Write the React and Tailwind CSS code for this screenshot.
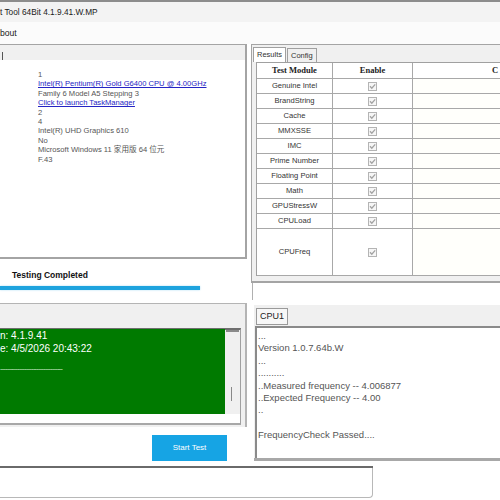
import React from "react";

const sysInfo = [
    { text: "1" },
    { text: "Intel(R) Pentium(R) Gold G6400 CPU @ 4.00GHz", link: true },
    { text: "Family 6 Model A5 Stepping 3" },
    { text: "Click to launch TaskManager", link: true },
    { text: "2" },
    { text: "4" },
    { text: "Intel(R) UHD Graphics 610" },
    { text: "No" },
    { text: "Microsoft Windows 11 家用版 64 位元" },
    { text: "F.43" },
];

const modules = [
    "Genuine Intel",
    "BrandString",
    "Cache",
    "MMXSSE",
    "IMC",
    "Prime Number",
    "Floating Point",
    "Math",
    "GPUStressW",
    "CPULoad",
];

const freqLog = [
    "...",
    "Version 1.0.7.64b.W",
    "...",
    "..........",
    "..Measured frequency -- 4.006877",
    "..Expected Frequency -- 4.00",
    "..",
    "\u00a0",
    "FrequencyCheck Passed....",
];

// greyed-out (disabled) checked box
const CheckBox = () => (
    <svg width="9" height="9" viewBox="0 0 9 9">
        <rect x="0.5" y="0.5" width="8" height="8" fill="#f6f6f6" stroke="#b4b4b4" />
        <path d="M2 4.3 L3.8 6.2 L7.2 2.4" fill="none" stroke="#a2a2a2" strokeWidth="1.3" />
    </svg>
);

const ModuleRow = ({ name, tall }) => (
    <div className={`flex border-b border-[#a8a8a8] ${tall ? "h-[47px]" : "h-[15px]"}`}>
        <div className="w-[76px] shrink-0 border-r border-[#a8a8a8] flex items-center justify-center text-[7.6px] text-[#333]">{name}</div>
        <div className="w-[80px] shrink-0 border-r border-[#a8a8a8] flex items-center justify-center">
            <CheckBox />
        </div>
        <div className="flex-1 bg-[#fffffb]" />
    </div>
);

const App = () => {
    return (
        <div className="w-[500px] h-[500px] overflow-hidden bg-white flex flex-col font-['Liberation_Sans','Noto_Sans_CJK_TC',sans-serif] text-[#333]">
            <div className="h-[2px] bg-[#8c8c8c]" />
            {/* title + menu */}
            <div className="h-[20px] bg-[#f3f3f3] flex items-center text-[8.3px] text-[#1a1a1a]">t Tool 64Bit 4.1.9.41.W.MP</div>
            <div className="h-[22px] bg-[#fbfbfb] flex items-center text-[8.6px] text-[#1a1a1a]">bout</div>

            <div className="flex h-[422px]">
                {/* left column */}
                <div className="w-[247px] shrink-0 flex flex-col">
                    <div className="h-[215px] border-t border-r-2 border-b-2 border-[#a4a4a4] flex flex-col">
                        <div className="h-[15px] bg-[#f0f0f0] relative">
                            <div className="absolute left-[2px] top-[7px] w-[1px] h-[8px] bg-[#555]" />
                        </div>
                        <div className="flex-1 bg-white pl-[38px] pt-[10px] text-[7.6px] leading-[9.4px] text-[#555]">
                            {sysInfo.map((line, i) => (
                                <div key={i} className={line.link ? "text-[#2424c4] underline" : ""}>{line.text}</div>
                            ))}
                        </div>
                    </div>

                    <div className="h-[44px] flex flex-col">
                        <div className="pl-[12px] pt-[11px] text-[8.5px] font-bold text-[#111] leading-[10px]">Testing Completed</div>
                        <div className="mt-[6px] w-[200px] h-[4px] bg-[#1ea3de] shadow-[0_0_2px_#9fd8f2]" />
                    </div>

                    <div className="h-[124px] border-t border-r-2 border-[#b4b4b4] flex flex-col bg-[#f0f0f0]">
                        <div className="h-[24px]" />
                        <div className="w-[241px] h-[97px] border-t-2 border-r border-b-2 border-t-[#6e6e6e] border-r-[#a0a0a0] border-b-[#a8a8a8] flex flex-col bg-white">
                            <div className="flex h-[84px]">
                                <div className="w-[225px] bg-[#007a00] text-white text-[10px] leading-[13px] -mt-[1px] overflow-hidden">
                                    <div>n: 4.1.9.41</div>
                                    <div>e: 4/5/2026 20:43:22</div>
                                    <div className="h-[9px]" />
                                    <div className="text-[7px] leading-[10px] tracking-[-0.6px] text-[#d8ecd8]">------------------------------------</div>
                                </div>
                                <div className="flex-1 bg-[#f0f0f0] relative">
                                    <div className="absolute left-[1px] right-[1px] top-0 h-[2px] bg-[#8a8a8a]" />
                                    <div className="absolute left-[6px] top-[57px] w-[1px] h-[14px] bg-[#888]" />
                                </div>
                            </div>
                        </div>
                    </div>

                    <div className="h-[39px] pl-[152px] pt-[6px]">
                        <button className="w-[75px] h-[26px] bg-[#16a4e4] text-white text-[8px]">Start Test</button>
                    </div>
                </div>

                <div className="w-[4px] shrink-0" />

                {/* right column */}
                <div className="flex-1 flex flex-col">
                    <div className="h-[239px] border-t border-l border-b-2 border-[#a4a4a4] bg-[#f0f0f0] flex flex-col">
                        <div className="h-[17px] flex items-end pl-[1px]">
                            <div className="h-[15px] px-[3px] bg-white border-t border-l border-r border-[#a0a0a0] text-[7.5px] text-[#333] flex items-center">Results</div>
                            <div className="h-[14px] px-[3px] ml-[1px] border-t border-l border-r border-[#a0a0a0] text-[7.5px] text-[#333] flex items-center">Config</div>
                        </div>
                        <div className="ml-[4px] border-t border-l border-[#a0a0a0] bg-white flex flex-col">
                            <div className="flex h-[16px] border-b border-[#a8a8a8]">
                                <div className="w-[76px] shrink-0 border-r border-[#a8a8a8] flex items-center justify-center font-['Liberation_Serif',serif] font-bold text-[8.5px] text-[#222]">Test Module</div>
                                <div className="w-[80px] shrink-0 border-r border-[#a8a8a8] flex items-center justify-center font-['Liberation_Serif',serif] font-bold text-[8.5px] text-[#222]">Enable</div>
                                <div className="flex-1 pl-[79px] flex items-center font-['Liberation_Serif',serif] font-bold text-[8.5px] text-[#222]">C</div>
                            </div>
                            {modules.map((m) => (
                                <ModuleRow key={m} name={m} />
                            ))}
                            <ModuleRow name="CPUFreq" tall />
                        </div>
                    </div>

                    <div className="h-[22px] flex">
                        <div className="w-[2px] h-[17px] border-r border-[#b0b0b0]" />
                    </div>

                    <div className="h-[156px] ml-[3px] bg-[#f0f0f0] border-b-[3px] border-[#a8a8a8] flex flex-col">
                        <div className="h-[20px] flex items-end pl-[2px]">
                            <div className="h-[17px] px-[3px] bg-[#f7f7f7] border border-[#9a9a9a] text-[9px] text-[#222] flex items-center">CPU1</div>
                        </div>
                        <div className="flex-1 ml-[1px] mt-[1px] border-t-2 border-l-2 border-t-[#8a8a8a] border-l-[#8a8a8a] bg-white pt-[2px] pl-[1px] text-[9.5px] leading-[12.4px] text-[#555]">
                            {freqLog.map((l, i) => (
                                <div key={i}>{l}</div>
                            ))}
                        </div>
                    </div>
                </div>
            </div>

            {/* window behind */}
            <div className="h-[2px] w-[373px] bg-[#6a6a6a]" />
            <div className="h-[30px] w-[373px] border-r border-b border-[#b8b8b8] rounded-br-[4px]" />
        </div>
    );
};

export default App;
